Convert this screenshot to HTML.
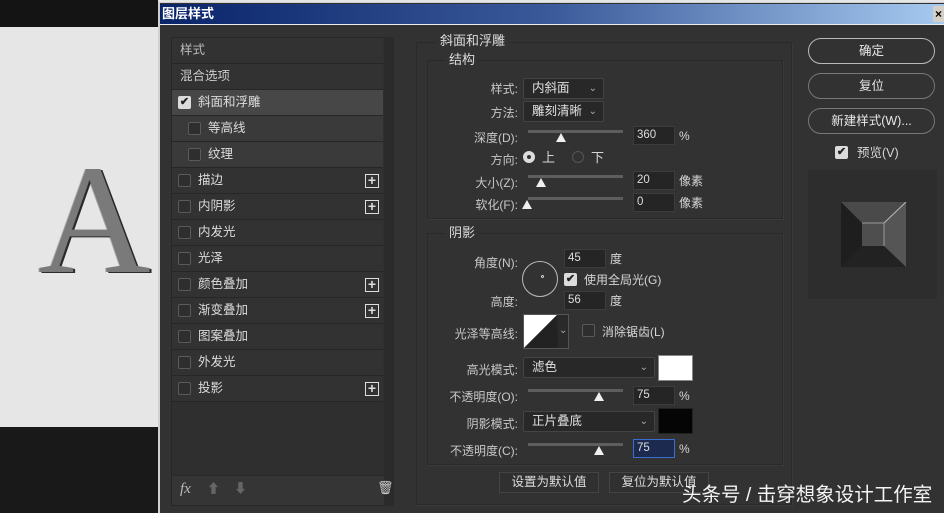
<!DOCTYPE html>
<html><head><meta charset="utf-8"><style>
*{margin:0;padding:0;box-sizing:border-box}
body{width:944px;height:513px;overflow:hidden;background:#e6e6e6;position:relative;font-family:"Liberation Sans","Noto Sans CJK SC",sans-serif;font-size:12px;color:#d6d6d6}
.a{position:absolute}
.t{position:absolute;white-space:nowrap;line-height:14px}
.row{position:absolute;left:172px;width:211px;height:26px;border-bottom:1px solid #262626;background:#323232}
.row span{position:absolute;left:26px;top:5px;font-size:12.5px;line-height:15px;color:#dcdcdc;white-space:nowrap}
.cb{position:absolute;width:13px;height:13px;border:1px solid #5a5a5a;border-radius:2px;background:#2e2e2e}
.row .cb{top:6px}
.cbk{position:absolute;width:13px;height:13px;background:#dcdcdc;border-radius:2px;color:#222;font-size:11px;line-height:13px;text-align:center;font-weight:bold}
.plus{position:absolute;left:193px;top:6px;width:14px;height:14px;border:1px solid #ddd;color:#ddd;font-size:14px;line-height:11px;text-align:center;font-weight:bold}
.sel{position:absolute;height:21px;background:#282828;border:1px solid #444;border-radius:2px;color:#e0e0e0;font-size:12.5px;padding-left:8px;line-height:19px}
.sel i{position:absolute;right:6px;top:0;font-style:normal;color:#aaa;font-size:10px}
.inp{position:absolute;height:19px;width:42px;background:#252525;border:1px solid #3c3c3c;color:#ddd;padding-left:3px;line-height:17px;font-size:11.5px}
.sl{position:absolute;height:3px;background:#5e5e5e}
.th{position:absolute;width:0;height:0;border-left:5px solid transparent;border-right:5px solid transparent;border-bottom:9px solid #f0f0f0}
.lbl{position:absolute;text-align:right;color:#c8c8c8;font-size:12px;white-space:nowrap}
.btn{position:absolute;left:808px;width:127px;height:26px;border:1px solid #b9b9b9;border-radius:13px;text-align:center;line-height:24px;color:#e8e8e8;font-size:12.5px}
.grp{position:absolute;border:1px solid #2a2a2a;box-shadow:1px 1px 0 #3a3a3a}
</style></head><body>
<div class="a" style="left:0;top:0;width:158px;height:27px;background:#141414"></div>
<div class="a" style="left:0;top:427px;width:158px;height:86px;background:#191919"></div>
<div class="t" style="left:38px;top:142px;font-family:'Liberation Serif',serif;font-size:156px;line-height:156px;color:#7a7a7a;text-shadow:2px 1px 0 #2a2a2a,-1px 0 0 #aaa">A</div>

<div class="a" style="left:158px;top:2px;width:786px;height:511px;background:#323232;border-left:2px solid #d0d0d0;border-top:1px solid #d0d0d0"></div>
<div class="a" style="left:160px;top:4px;width:784px;height:20px;background:linear-gradient(90deg,#0a246a,#3a5a9a 50%,#a6caf0)"></div>
<div class="t" style="left:162px;top:6px;color:#fff;font-weight:bold;font-size:13px;line-height:16px">图层样式</div>
<div class="a" style="left:933px;top:6px;width:11px;height:16px;background:#d4d0c8;color:#000;font-size:12px;line-height:16px;text-align:center;font-weight:bold">×</div>
<div class="a" style="left:160px;top:24px;width:784px;height:1px;background:#eee"></div>

<div class="a" style="left:171px;top:37px;width:214px;height:469px;background:#2f2f2f;border:1px solid #272727"></div>
<div class="a" style="left:384px;top:37px;width:10px;height:469px;background:#2b2b2b"></div>
<div class="row" style="top:38px"><span style="left:8px;color:#bbb">样式</span></div>
<div class="row" style="top:64px"><span style="left:8px;color:#ccc">混合选项</span></div>
<div class="row" style="top:90px;background:#474747"><div class="cbk" style="left:6px;top:6px">✔</div><span>斜面和浮雕</span></div>
<div class="row" style="top:116px;background:#3a3a3a"><div class="cb" style="left:16px"></div><span style="left:36px">等高线</span></div>
<div class="row" style="top:142px;background:#3a3a3a"><div class="cb" style="left:16px"></div><span style="left:36px">纹理</span></div>
<div class="row" style="top:168px"><div class="cb" style="left:6px"></div><span>描边</span><div class="plus">+</div></div>
<div class="row" style="top:194px"><div class="cb" style="left:6px"></div><span>内阴影</span><div class="plus">+</div></div>
<div class="row" style="top:220px"><div class="cb" style="left:6px"></div><span>内发光</span></div>
<div class="row" style="top:246px"><div class="cb" style="left:6px"></div><span>光泽</span></div>
<div class="row" style="top:272px"><div class="cb" style="left:6px"></div><span>颜色叠加</span><div class="plus">+</div></div>
<div class="row" style="top:298px"><div class="cb" style="left:6px"></div><span>渐变叠加</span><div class="plus">+</div></div>
<div class="row" style="top:324px"><div class="cb" style="left:6px"></div><span>图案叠加</span></div>
<div class="row" style="top:350px"><div class="cb" style="left:6px"></div><span>外发光</span></div>
<div class="row" style="top:376px"><div class="cb" style="left:6px"></div><span>投影</span><div class="plus">+</div></div>
<div class="a" style="left:172px;top:475px;width:212px;height:30px;background:#353535;border-top:1px solid #2a2a2a"></div>
<div class="t" style="left:180px;top:482px;font-family:'Liberation Serif',serif;font-style:italic;font-size:15px;color:#bbb">fx</div>
<div class="t" style="left:207px;top:482px;color:#666;font-size:13px">⬆</div>
<div class="t" style="left:234px;top:482px;color:#666;font-size:13px">⬇</div>
<div class="t" style="left:377px;top:481px;color:#ccc;font-size:13px">🗑</div>

<div class="grp" style="left:416px;top:42px;width:376px;height:463px"></div>
<div class="t" style="left:436px;top:34px;background:#323232;padding:0 4px;font-size:13px;color:#ddd">斜面和浮雕</div>
<div class="grp" style="left:427px;top:60px;width:356px;height:159px"></div>
<div class="t" style="left:446px;top:53px;background:#323232;padding:0 3px;font-size:13px;color:#ddd">结构</div>
<div class="lbl" style="left:440px;width:78px;top:80px">样式:</div>
<div class="sel" style="left:523px;top:78px;width:81px">内斜面<i>⌄</i></div>
<div class="lbl" style="left:440px;width:78px;top:104px">方法:</div>
<div class="sel" style="left:523px;top:101px;width:81px">雕刻清晰<i>⌄</i></div>
<div class="lbl" style="left:440px;width:78px;top:129px">深度(D):</div>
<div class="sl" style="left:528px;top:130px;width:95px"></div><div class="th" style="left:556px;top:133px"></div>
<div class="inp" style="left:633px;top:126px">360</div><div class="t" style="left:679px;top:129px">%</div>
<div class="lbl" style="left:440px;width:78px;top:151px">方向:</div>
<div class="a" style="left:523px;top:151px;width:12px;height:12px;border-radius:50%;background:#ddd;border:3px solid #ddd"><div class="a" style="left:1px;top:1px;width:4px;height:4px;background:#333;border-radius:50%"></div></div>
<div class="t" style="left:542px;top:151px;font-size:13px">上</div>
<div class="a" style="left:572px;top:151px;width:12px;height:12px;border-radius:50%;border:1px solid #555"></div>
<div class="t" style="left:591px;top:151px;font-size:13px">下</div>
<div class="lbl" style="left:440px;width:78px;top:174px">大小(Z):</div>
<div class="sl" style="left:528px;top:175px;width:95px"></div><div class="th" style="left:536px;top:178px"></div>
<div class="inp" style="left:633px;top:171px">20</div><div class="t" style="left:679px;top:174px">像素</div>
<div class="lbl" style="left:440px;width:78px;top:196px">软化(F):</div>
<div class="sl" style="left:528px;top:197px;width:95px"></div><div class="th" style="left:522px;top:200px"></div>
<div class="inp" style="left:633px;top:193px">0</div><div class="t" style="left:679px;top:196px">像素</div>

<div class="grp" style="left:427px;top:233px;width:356px;height:232px"></div>
<div class="t" style="left:446px;top:226px;background:#323232;padding:0 3px;font-size:13px;color:#ddd">阴影</div>
<div class="lbl" style="left:440px;width:78px;top:254px">角度(N):</div>
<div class="a" style="left:522px;top:261px;width:36px;height:36px;border:1px solid #bbb;border-radius:50%"><div class="a" style="left:18px;top:13px;width:3px;height:3px;border:1px solid #ccc;border-radius:50%"></div></div>
<div class="inp" style="left:564px;top:249px">45</div><div class="t" style="left:610px;top:252px">度</div>
<div class="cbk" style="left:564px;top:273px">✔</div><div class="t" style="left:584px;top:273px">使用全局光(G)</div>
<div class="lbl" style="left:440px;width:78px;top:293px">高度:</div>
<div class="inp" style="left:564px;top:291px">56</div><div class="t" style="left:610px;top:294px">度</div>
<div class="lbl" style="left:440px;width:78px;top:325px">光泽等高线:</div>
<div class="a" style="left:523px;top:314px;width:46px;height:35px;border:1px solid #555;background:#2a2a2a"></div>
<svg class="a" style="left:524px;top:315px" width="34" height="33"><polygon points="0,0 33,0 0,33" fill="#fff"/><polygon points="33,0 34,33 0,33" fill="#222"/></svg>
<div class="t" style="left:559px;top:324px;font-size:10px;color:#aaa">⌄</div>
<div class="cb" style="left:582px;top:324px"></div><div class="t" style="left:602px;top:325px">消除锯齿(L)</div>
<div class="lbl" style="left:440px;width:78px;top:361px">高光模式:</div>
<div class="sel" style="left:523px;top:357px;width:132px">滤色<i>⌄</i></div>
<div class="a" style="left:658px;top:355px;width:35px;height:26px;background:#fff;border:1px solid #888"></div>
<div class="lbl" style="left:440px;width:78px;top:388px">不透明度(O):</div>
<div class="sl" style="left:528px;top:389px;width:95px"></div><div class="th" style="left:594px;top:392px"></div>
<div class="inp" style="left:633px;top:386px">75</div><div class="t" style="left:679px;top:389px">%</div>
<div class="lbl" style="left:440px;width:78px;top:415px">阴影模式:</div>
<div class="sel" style="left:523px;top:411px;width:132px">正片叠底<i>⌄</i></div>
<div class="a" style="left:658px;top:408px;width:35px;height:26px;background:#050505;border:1px solid #222"></div>
<div class="lbl" style="left:440px;width:78px;top:442px">不透明度(C):</div>
<div class="sl" style="left:528px;top:443px;width:95px"></div><div class="th" style="left:594px;top:446px"></div>
<div class="inp" style="left:633px;top:439px;border-color:#3a6ed0;background:#1c2a50">75</div><div class="t" style="left:679px;top:442px">%</div>
<div class="a" style="left:499px;top:472px;width:100px;height:21px;border:1px solid #444;background:#303030;text-align:center;line-height:19px;font-size:12.5px;color:#ddd">设置为默认值</div>
<div class="a" style="left:609px;top:472px;width:100px;height:21px;border:1px solid #444;background:#303030;text-align:center;line-height:19px;font-size:12.5px;color:#ddd">复位为默认值</div>

<div class="btn" style="top:38px">确定</div>
<div class="btn" style="top:73px;border-color:#777">复位</div>
<div class="btn" style="top:108px;border-color:#777">新建样式(W)...</div>
<div class="cbk" style="left:835px;top:146px">✔</div><div class="t" style="left:857px;top:146px;font-size:12.5px">预览(V)</div>
<div class="a" style="left:808px;top:170px;width:129px;height:129px;background:#2d2d2d"></div>
<svg class="a" style="left:841px;top:202px" width="66" height="66">
<polygon points="0,0 65,0 43,21 21,21" fill="#4a4a4a"/>
<polygon points="65,0 65,65 43,44 43,21" fill="#555"/>
<polygon points="0,0 21,21 21,44 0,65" fill="#1e1e1e"/>
<polygon points="0,65 21,44 43,44 65,65" fill="#222"/>
<rect x="21" y="21" width="22" height="23" fill="#4e4e4e"/>
<line x1="43" y1="21" x2="65" y2="0" stroke="#bbb"/>
<polyline points="21,21 43,21 43,44" fill="none" stroke="#999"/>
</svg>
<div class="t" style="left:682px;top:484px;font-size:19.5px;line-height:22px;color:#f4f4f4">头条号 / 击穿想象设计工作室</div>
</body></html>
